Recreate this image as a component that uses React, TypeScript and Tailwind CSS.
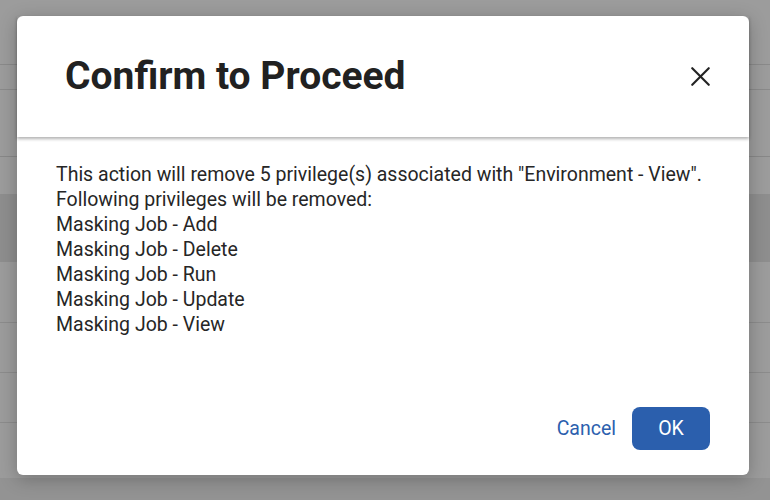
import { X } from "lucide-react"

const privileges = ["Add", "Delete", "Run", "Update", "View"]

export default function App() {
  return (
    <div className="relative w-[770px] h-[500px] overflow-hidden bg-[#9c9c9c] font-['Roboto',sans-serif]">
      {/* background page under the overlay */}
      <div className="flex flex-col">
        <div className="h-[64px]" />
        <div className="h-[25px] border-t border-[#8a8a8a]" />
        <div className="h-[67px] border-t border-[#8a8a8a]" />
        <div className="h-[38px] border-t border-[#888]" />
        <div className="h-[68px] bg-[#8e8e8e]" />
        <div className="h-[60px]" />
        <div className="h-[50px] border-t border-[#8c8c8c]" />
        <div className="h-[50px] border-t border-[#8c8c8c]" />
        <div className="h-[56px] border-t border-[#8c8c8c]" />
        <div className="h-[22px] bg-[#939393]" />
      </div>

      {/* modal */}
      <div className="absolute left-[17px] top-[16px] w-[732px] h-[459px] rounded-[6px] bg-white shadow-[0_4px_18px_rgba(0,0,0,0.25)] flex flex-col">
        <div className="h-[121px] flex items-center justify-between pl-[48px] pr-[32px] shadow-[0_2px_3px_rgba(0,0,0,0.3)]">
          <h2 className="text-[39px] font-bold text-[#212121]">Confirm to Proceed</h2>
          <X className="w-[33px] h-[33px] text-[#222]" strokeWidth={1.6} />
        </div>

        <div className="flex-1 pt-[25px] px-[39px] text-[19.5px] leading-[25px] text-[#262626]">
          <p>This action will remove 5 privilege(s) associated with "Environment - View".</p>
          <p>Following privileges will be removed:</p>
          {privileges.map((p) => (
            <p key={p}>Masking Job - {p}</p>
          ))}
        </div>

        <div className="flex items-center justify-end gap-[16px] pr-[39px] pb-[25px]">
          <button className="text-[19.5px] text-[#2c5fae]">Cancel</button>
          <button className="w-[78px] h-[43px] rounded-[8px] bg-[#2b5fad] text-[19.5px] text-white">OK</button>
        </div>
      </div>
    </div>
  )
}
